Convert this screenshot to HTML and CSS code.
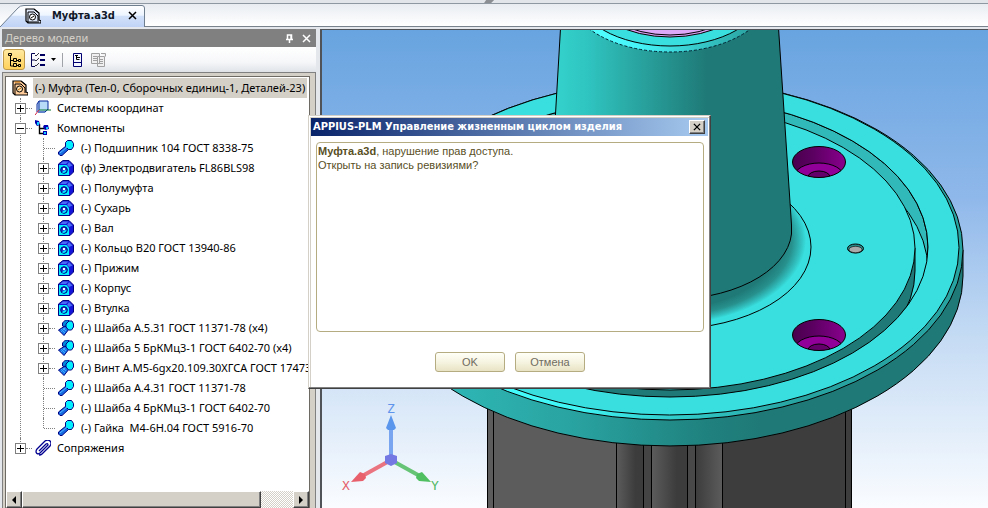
FILE: index.html
```html
<!DOCTYPE html>
<html lang="ru">
<head>
<meta charset="utf-8">
<title>Муфта.a3d</title>
<link rel="stylesheet" href="styles.css">
</head>
<body>
<svg class="defs" aria-hidden="true">
  <symbol id="i-assembly" viewBox="0 0 16 16">
    <path d="M1 1h8l5 4v7l2 1v2H3l-2-2z" fill="#fc9" stroke="#000" stroke-width="1.2"/>
    <path d="M9 1l5 4M3 15V4h6l4 4v5" fill="none" stroke="#000"/>
    <circle cx="7.500" cy="9" r="3" fill="#ffe0b0" stroke="#000"/>
    <path d="M6 10l3-2M3 2h5" stroke="#b60" fill="none"/>
  </symbol>
  <symbol id="i-doc" viewBox="0 0 16 16">
    <path d="M1 1h8l5 4v7l2 1v2H3l-2-2z" fill="#dfe8f8" stroke="#000" stroke-width="1.2"/>
    <path d="M9 1l5 4M3 15V4h6l4 4v5" fill="none" stroke="#000"/>
    <circle cx="7.500" cy="9" r="3" fill="#fff" stroke="#000"/>
    <path d="M6 10l3-2M2 14h12" stroke="#000" fill="none"/>
  </symbol>
  <symbol id="i-axes" viewBox="0 0 16 16">
    <path d="M2 4l2-3h9v9l-3 3H3z" fill="#b8dcf8"/>
    <path d="M4 10V1h9v9M2 12V4l2-3M3 12h7l3-3" fill="none" stroke="#0a2a9c"/>
    <path d="M4 10h12" stroke="#087830"/><path d="M4 10l-4 5" stroke="#d02040"/>
  </symbol>
  <symbol id="i-parts" viewBox="0 0 16 16">
    <path d="M4.500 4v9.500H9M4.500 8.500H10" fill="none" stroke="#000" stroke-width="1.400"/>
    <path d="M0 0l4 1 1 4-3 1-2-3zM9 5l4 0 1 4-4 1-2-3zM8 11l4 0 0 4-4 0z" fill="#0000b0"/>
    <path d="M2 2h2v3H2zM11 7h2v2h-2zM9 12h2v2H9z" fill="#1cf"/>
  </symbol>
  <symbol id="i-bolt" viewBox="0 0 16 16">
    <path d="M.5 12L8 6l3 3-7 6.500H2L.5 14z" fill="#1468e0" stroke="#000080"/>
    <path d="M7.500 2.500l2-2h4l2 3v3l-2 3h-3l-3-3z" fill="#0ef" stroke="#000080"/>
    <path d="M2 13l7-6" stroke="#5bf"/>
  </symbol>
  <symbol id="i-bolts" viewBox="0 0 16 16">
    <path d="M4.500 3l3-3h3l1 3-4 4-3-1z" fill="#08d" stroke="#000080"/>
    <path d="M.5 10L7 6l4 3-5 6.500z" fill="#1878e8" stroke="#000080"/>
    <path d="M3 9l4 4M5 8l3 3M3 12l4-4" stroke="#4af" fill="none"/>
    <path d="M8 4l3-3h3l1.500 3v3l-2 3h-3L8 7z" fill="#0ef" stroke="#000080"/>
  </symbol>
  <symbol id="i-part" viewBox="0 0 16 16">
    <path d="M.5 4L5 .5h6L15.500 5v7L12 15.500H.500z" fill="#1414d8" stroke="#000080"/>
    <path d="M2 4l3-2.500h5.500L8 4zM11 2l3.500 3.500L11 7 9 5z" fill="#4a6cf4"/>
    <path d="M1 5h7.500l2.500 3v7H1z" fill="#0ef"/>
    <circle cx="6" cy="10" r="3.300" fill="#1840d0" stroke="#000080"/>
    <path d="M4 12.500A3 3 0 0 0 8.500 10L6 10.500z" fill="#0ef"/>
    <path d="M5 8h2v2H5z" fill="#fff"/>
  </symbol>
  <symbol id="i-clip" viewBox="0 0 16 16">
    <path d="M4 11l7-7q2-1 2 1l-8 8q-3 2-4-1 0-2 1-3l8-8q3-2 5 0t0 5l-8 8q-1 1-3 1" fill="none" stroke="#000090" stroke-width="1.300"/>
  </symbol>
</svg>

<header class="tabs">
  <svg class="tab-shape" viewBox="0 0 146 22" aria-hidden="true">
    <defs><linearGradient id="tabg" x2="0" y2="1"><stop offset="0" stop-color="#fff"/><stop offset=".45" stop-color="#eef5ff"/><stop offset=".5" stop-color="#d2e1fa"/><stop offset="1" stop-color="#c0d3f6"/></linearGradient></defs>
    <path d="M0 22L18 3Q20 .5 24 .5H142Q144.500 .5 144.500 3V22" fill="url(#tabg)" stroke="#6f7f90"/>
  </svg>
  <div class="tab">
    <svg class="icon"><use href="#i-doc"/></svg>
    <a class="tab-name" href="#scene">Муфта.a3d</a>
    <button class="bare" aria-label="Закрыть вкладку"><svg viewBox="0 0 9 9" class="cross"><path d="M1 1l7 7M8 1l-7 7"/></svg></button>
  </div>
</header>

<main class="work">
  <aside class="panel">
    <div class="panel-title">
      <h2>Дерево модели</h2>
      <button class="bare light" aria-label="Закрепить"><svg viewBox="0 0 9 9" class="cross"><path d="M2.500 5V1h4v4M1 5.500h7M4.500 6v3M6 1v4"/></svg></button>
      <button class="bare light" aria-label="Закрыть панель"><svg viewBox="0 0 9 9" class="cross"><path d="M1 1l7 7M8 1l-7 7"/></svg></button>
    </div>
    <div class="toolbar">
      <button class="tool on" aria-label="Дерево"><svg class="icon" viewBox="0 0 16 16"><path d="M4.500 3v11H8M4.500 8.500H8M11 8.500h2M11 13.500h2" fill="none" stroke="#000"/><path d="M2.500 1.500h3v2h-3zM7.500 6.500h3v3h-3zM7.500 11.500h3v3h-3zM12.500 7.500h2v2h-2zM12.500 12.500h2v2h-2z" fill="#ffd970" stroke="#000"/></svg></button>
      <button class="tool" aria-label="Состав"><svg class="icon" viewBox="0 0 16 16"><path d="M5 1.500H1.500v13H5M2 8h3" fill="none" stroke="#000050"/><path d="M5 3l1 1 3-3M5 8l1 1 3-3M5 13l1 1 3-3" fill="none" stroke="#334"/><path d="M10 3h5M10 8h5M10 13h5" stroke="#000060" stroke-width="2"/></svg></button>
      <svg class="caret" viewBox="0 0 5 3"><path d="M0 0h5L2.500 3z"/></svg>
      <span class="divider"></span>
      <button class="tool" aria-label="Раздел"><svg class="icon" viewBox="0 0 16 16"><path d="M4.500 1.500h8v13h-8zM4 10.500h9" fill="#f4f6ff" stroke="#000070"/><path d="M6 3.500h3M7.500 4v3.500h3M8 5.500h3" fill="none" stroke="#000"/></svg></button>
      <button class="tool" aria-label="Отчёт"><svg class="icon" viewBox="0 0 16 16"><path d="M.5 1.500h8v10h-8zM6.500 4.500h7v10h-7zM2 4.500h4M2 6.500h4M2 8.500h4M8 7.500h4M8 9.500h4M8 11.500h4M10 1.500h4.500v3" fill="#f0f0f0" stroke="#a0a0a0"/></svg></button>
    </div>
    <div class="frame">
      <div class="tree">
        <div class="root"><svg class="icon"><use href="#i-assembly"/></svg><span class="root-name">(-) Муфта (Тел-0, Сборочных единиц-1, Деталей-23)</span></div>
        <ul class="level">
          <li><div class="row"><button class="exp plus" aria-label="Развернуть"></button><svg class="icon"><use href="#i-axes"/></svg><span>Системы координат</span></div></li>
          <li><div class="row"><button class="exp" aria-label="Свернуть"></button><svg class="icon"><use href="#i-parts"/></svg><span>Компоненты</span></div>
            <ul class="level sub">
              <li><div class="row leaf"><svg class="icon"><use href="#i-bolt"/></svg><span>(-) Подшипник 104 ГОСТ 8338-75</span></div></li>
              <li><div class="row"><button class="exp plus" aria-label="Развернуть"></button><svg class="icon"><use href="#i-part"/></svg><span>(ф) Электродвигатель FL86BLS98</span></div></li>
              <li><div class="row"><button class="exp plus" aria-label="Развернуть"></button><svg class="icon"><use href="#i-part"/></svg><span>(-) Полумуфта</span></div></li>
              <li><div class="row"><button class="exp plus" aria-label="Развернуть"></button><svg class="icon"><use href="#i-part"/></svg><span>(-) Сухарь</span></div></li>
              <li><div class="row"><button class="exp plus" aria-label="Развернуть"></button><svg class="icon"><use href="#i-part"/></svg><span>(-) Вал</span></div></li>
              <li><div class="row"><button class="exp plus" aria-label="Развернуть"></button><svg class="icon"><use href="#i-part"/></svg><span>(-) Кольцо В20 ГОСТ 13940-86</span></div></li>
              <li><div class="row"><button class="exp plus" aria-label="Развернуть"></button><svg class="icon"><use href="#i-part"/></svg><span>(-) Прижим</span></div></li>
              <li><div class="row"><button class="exp plus" aria-label="Развернуть"></button><svg class="icon"><use href="#i-part"/></svg><span>(-) Корпус</span></div></li>
              <li><div class="row"><button class="exp plus" aria-label="Развернуть"></button><svg class="icon"><use href="#i-part"/></svg><span>(-) Втулка</span></div></li>
              <li><div class="row"><button class="exp plus" aria-label="Развернуть"></button><svg class="icon"><use href="#i-bolts"/></svg><span>(-) Шайба А.5.31 ГОСТ 11371-78 (x4)</span></div></li>
              <li><div class="row"><button class="exp plus" aria-label="Развернуть"></button><svg class="icon"><use href="#i-bolts"/></svg><span>(-) Шайба 5 БрКМц3-1 ГОСТ 6402-70 (x4)</span></div></li>
              <li><div class="row"><button class="exp plus" aria-label="Развернуть"></button><svg class="icon"><use href="#i-bolts"/></svg><span>(-) Винт А.М5-6gx20.109.30ХГСА ГОСТ 17473</span></div></li>
              <li><div class="row leaf"><svg class="icon"><use href="#i-bolt"/></svg><span>(-) Шайба А.4.31 ГОСТ 11371-78</span></div></li>
              <li><div class="row leaf"><svg class="icon"><use href="#i-bolt"/></svg><span>(-) Шайба 4 БрКМц3-1 ГОСТ 6402-70</span></div></li>
              <li><div class="row leaf"><svg class="icon"><use href="#i-bolt"/></svg><span>(-) Гайка&nbsp; М4-6Н.04 ГОСТ 5916-70</span></div></li>
            </ul>
          </li>
          <li><div class="row"><button class="exp plus" aria-label="Развернуть"></button><svg class="icon"><use href="#i-clip"/></svg><span>Сопряжения</span></div></li>
        </ul>
        <div class="scroll">
          <button class="raised" aria-label="Влево"><svg viewBox="0 0 4 8" class="arrow"><path d="M4 0v8L0 4z"/></svg></button>
          <div class="raised thumb"></div>
          <div class="track"></div>
          <button class="raised" aria-label="Вправо"><svg viewBox="0 0 4 8" class="arrow"><path d="M0 0v8l4-4z"/></svg></button>
        </div>
      </div>
    </div>
  </aside>

  <div class="view" id="scene">
    <svg class="scene" viewBox="322 30 666 478" preserveAspectRatio="xMinYMin slice" role="img" aria-label="Модель муфты">
      <defs>
        <linearGradient id="cone" gradientUnits="userSpaceOnUse" x1="555" x2="706"><stop offset="0" stop-color="#34d2cc"/><stop offset=".22" stop-color="#2fc4c0"/><stop offset=".55" stop-color="#29a4a0"/><stop offset="1" stop-color="#1f7a77"/></linearGradient>
        <linearGradient id="side" gradientUnits="userSpaceOnUse" x1="440" x2="760"><stop offset="0" stop-color="#2eb8b6"/><stop offset=".4" stop-color="#29a4a2"/><stop offset=".85" stop-color="#1f807d"/><stop offset="1" stop-color="#1f7a77"/></linearGradient>
        <linearGradient id="chamfer" gradientUnits="userSpaceOnUse" x1="480" x2="800"><stop offset="0" stop-color="#46ffff"/><stop offset=".3" stop-color="#40f4f4"/><stop offset=".6" stop-color="#32cccb"/><stop offset="1" stop-color="#27a3a1"/></linearGradient>
        <linearGradient id="lip" gradientUnits="userSpaceOnUse" x1="590" x2="750"><stop offset="0" stop-color="#50ffff"/><stop offset=".3" stop-color="#46f4f8"/><stop offset="1" stop-color="#2aa4a2"/></linearGradient>
        <radialGradient id="fillet" gradientUnits="userSpaceOnUse" cx="0" cy="0" r="141" gradientTransform="translate(665 240) scale(1 .6)"><stop offset=".82" stop-color="#1f7a77"/><stop offset=".9" stop-color="#27908d"/><stop offset=".97" stop-color="#32c4c3"/><stop offset="1" stop-color="#38dfde"/></radialGradient>
        <linearGradient id="bore"><stop offset="0" stop-color="#48004c"/><stop offset=".4" stop-color="#5c0062"/><stop offset="1" stop-color="#8a008e"/></linearGradient>
        <linearGradient id="g1"><stop offset="0" stop-color="#5c5c5c"/><stop offset=".7" stop-color="#3c3c3c"/></linearGradient>
        <linearGradient id="g2"><stop offset="0" stop-color="#3c3c3c"/><stop offset="1" stop-color="#5c5c5c"/></linearGradient>
        <clipPath id="groove"><ellipse cx="670" cy="247" rx="258" ry="150"/></clipPath>
        <clipPath id="hole"><ellipse rx="26.500" ry="15.500"/></clipPath>
        <g id="bolt-hole">
          <g clip-path="url(#hole)"><ellipse rx="27" ry="16" fill="url(#bore)"/><ellipse cy="15" rx="25" ry="14" fill="#92009a" stroke="#000"/><ellipse cy="15" rx="11" ry="6" fill="#64006a" stroke="#000"/></g>
          <ellipse rx="26.500" ry="15.500" fill="none" stroke="#000"/>
        </g>
      </defs>
      <g stroke="#000">
        <path d="M487.500 380H851.500V520H487.500z" fill="#5c5c5c"/>
        <path d="M616.500 420h27v100h-27z" fill="url(#g1)"/>
        <path d="M643.500 420h8v100h-8z" fill="#444"/>
        <path d="M651.500 420h36v100h-36z" fill="url(#g1)"/>
        <path d="M687.500 420h8v100h-8z" fill="#484848"/>
        <path d="M695.500 420h27v100h-27z" fill="url(#g2)"/>
        <path d="M722.500 380h123v140h-123zM845.500 380h6v140h-6z" fill="#3d3d3d"/>
        <path d="M493.500 380v140"/>
        <path d="M377 250V276A293 170 0 0 0 963 276V250" fill="url(#side)"/>
        <ellipse cx="670" cy="250" rx="293" ry="170" fill="url(#chamfer)"/>
        <ellipse cx="669.500" cy="247.500" rx="289.500" ry="167.500" fill="#38dfde"/>
        <g clip-path="url(#groove)">
          <ellipse cx="670" cy="247" rx="258" ry="150" fill="#30b9b8"/>
          <ellipse cx="670" cy="270" rx="258" ry="150" fill="#38dfde"/>
          <path d="M425 248V271A245 142 0 0 0 915 271V248" fill="#1f7a77"/>
          <ellipse cx="670" cy="248" rx="245" ry="142" fill="#38dfde"/>
        </g>
        <ellipse cx="670" cy="247" rx="258" ry="150" fill="none"/>
        <ellipse cx="670" cy="247" rx="141" ry="82" fill="url(#fillet)"/>
        <path d="M561 20L549 225A121.500 70 0 0 0 791.500 234V225L778 20z" fill="url(#cone)"/>
        <ellipse cx="670" cy="-6" rx="101" ry="58" fill="url(#lip)" stroke="#023" stroke-dasharray="3 2"/>
        <ellipse cx="670" cy="-8" rx="94" ry="54" fill="#38dfde"/>
        <ellipse cx="670" cy="-9" rx="80" ry="46" fill="#d9a0f4"/>
        <ellipse cx="670" cy="-10" rx="76" ry="45" fill="#dca8f8"/>
        <ellipse cx="855.500" cy="248.500" rx="8" ry="4.500" fill="#288e8c"/>
        <ellipse cx="855.500" cy="249.500" rx="6.500" ry="3.200" fill="#aaa" stroke-width=".6"/>
      </g>
      <use href="#bolt-hole" x="819" y="162"/>
      <use href="#bolt-hole" x="819" y="335"/>
      <g class="triad">
        <path d="M391 460V428" stroke="#78a4f0" stroke-width="4"/><path d="M391 415l5 13-2 2h-6l-2-2z" fill="#5a96ec"/>
        <path d="M391 460L364 475" stroke="#ea7480" stroke-width="4"/><path d="M351 482l9-10 5 2 1 4-3 3z" fill="#e8606c"/>
        <path d="M391 460L418 475" stroke="#66c477" stroke-width="4"/><path d="M431 482l-9-10-5 2-1 4 3 3z" fill="#50bf62"/>
        <path d="M385 456l6-2 6 2v7l-6 3-6-3z" fill="#7478e2"/>
        <text class="z" x="387" y="413">Z</text><text class="x" x="342" y="490">X</text><text class="y" x="431" y="490">Y</text>
      </g>
    </svg>
  </div>
</main>

<section class="dialog" role="dialog" aria-labelledby="dlg-title">
  <div class="dialog-bar">
    <h1 id="dlg-title">APPIUS-PLM Управление жизненным циклом изделия</h1>
    <button class="raised close" aria-label="Закрыть"><svg viewBox="0 0 9 9" class="cross"><path d="M1 1l7 7M8 1l-7 7"/></svg></button>
  </div>
  <div class="dialog-body">
    <p class="message"><b>Муфта.a3d</b>, нарушение прав доступа.<br>Открыть на запись ревизиями?</p>
    <div class="actions"><button class="btn">OK</button><button class="btn">Отмена</button></div>
  </div>
</section>
</body>
</html>
```
FILE: styles.css
```css
* { box-sizing: border-box; }
body {
  margin: 0;
  height: 100vh;
  display: flex;
  flex-direction: column;
  overflow: hidden;
  background: #e4e8ec;
  color: #000;
  font: 11px/20px "Noto Sans", sans-serif;
}
button { margin: 0; padding: 0; font: inherit; color: inherit; }
h1, h2, p, ul { margin: 0; padding: 0; }
ul { list-style: none; }
.defs { position: absolute; width: 0; height: 0; }
.icon { width: 16px; height: 16px; flex: none; display: block; }
.cross { width: 9px; height: 9px; display: block; fill: none; stroke: currentColor; stroke-width: 2; }
.bare { border: 0; background: none; }

.tabs {
  flex: none;
  position: relative;
  height: 27px;
  border-top: 3px solid #e2e5e9;
  border-bottom: 1px solid #77828c;
  background: linear-gradient(#8d98a3 0 1px, #e9edf2 1px, #fff);
}
.tabs::after {
  content: "";
  position: absolute;
  left: 49%;
  top: -3px;
  width: 10px;
  height: 3px;
  background: #8b8f94;
  clip-path: polygon(20% 0, 100% 0, 70% 100%, 0 100%);
}
.tab-shape { position: absolute; left: 0; top: 2px; width: 146px; height: 22px; }
.tab {
  position: relative;
  display: flex;
  align-items: center;
  height: 25px;
  padding-left: 25px;
}
.tab-name {
  margin: 0 13px 0 11px;
  color: #101828;
  font: bold 11px/20px "DejaVu Sans Condensed", "Noto Sans", sans-serif;
  text-decoration: none;
}
.tab .cross { stroke-width: 1.5; }

.work { flex: 1; min-height: 0; display: flex; padding-top: 2px; }
.panel { flex: none; width: 316px; padding-left: 2px; display: flex; flex-direction: column; }
.panel-title {
  display: flex;
  align-items: center;
  gap: 8px;
  height: 18px;
  padding: 0 5px 0 3px;
  background: #808080;
  color: #d4d0c8;
}
.panel-title h2 { flex: 1; font: inherit; }
.light { color: #fff; }
.light .cross { stroke-width: 1.5; }
.toolbar {
  display: flex;
  align-items: center;
  height: 25px;
  padding-left: 1px;
  background: linear-gradient(#fff, #f6f7f9 60%, #dfe3e8);
}
.tool {
  width: 22px;
  height: 21px;
  display: grid;
  place-items: center;
  border: 1px solid transparent;
  border-radius: 3px;
  background: none;
}
.tool.on { margin-right: 2px; border-color: #c09a48; background: linear-gradient(#ffe9a0, #ffd15c); }
.caret { width: 5px; height: 3px; margin: 0 6px 0 2px; }
.divider { width: 1px; height: 14px; margin-right: 3px; background: #a0a4a8; }

.frame {
  flex: 1;
  min-height: 0;
  display: flex;
  padding: 3px 5px 0 2px;
  border: 1px solid #808080;
  border-bottom: 0;
  background: #d4d0c8;
}
.tree {
  flex: 1;
  min-width: 0;
  display: flex;
  flex-direction: column;
  overflow: hidden;
  border: 1px solid #6d6a64;
  border-bottom: 0;
  background: #fff;
}
.root { display: flex; align-items: center; height: 20px; margin-top: 1px; padding-left: 6px; gap: 5px; }
.root-name { padding: 0 2px; background: #d4d0c8; white-space: nowrap; }
.level { padding-left: 9px; }
.level li { position: relative; }
.level li::before {
  content: "";
  position: absolute;
  left: 5px;
  top: 0;
  height: 100%;
  border-left: 1px dotted #808080;
}
.level > li:last-child::before { height: 10px; }
.sub { padding-left: 23px; }
.row { position: relative; display: flex; align-items: center; height: 20px; white-space: nowrap; }
.row::before { content: ""; order: 1; flex: none; width: 6px; margin-right: 3px; border-top: 1px dotted #808080; }
.row .icon { order: 2; margin-right: 6px; }
.row span { order: 3; }
.sub .icon { margin-right: 7px; }
.leaf { padding-left: 6px; }
.leaf::before { width: 11px; }
.exp {
  flex: none;
  width: 11px;
  height: 11px;
  border: 1px solid #808080;
  background: linear-gradient(#000, #000) center / 7px 1px no-repeat #fff;
}
.exp.plus {
  background: linear-gradient(#000, #000) center / 7px 1px no-repeat,
    linear-gradient(#000, #000) center / 1px 7px no-repeat #fff;
}
.scroll { display: flex; height: 17px; margin-top: auto; }
.raised {
  display: grid;
  place-items: center;
  border: 1px solid;
  border-color: #fff #404040 #404040 #fff;
  background: #d4d0c8;
  box-shadow: inset -1px -1px #808080;
}
.scroll button { flex: none; width: 16px; }
.thumb { flex: 238; }
.track { flex: 32; background: repeating-conic-gradient(#d4d0c8 0 25%, #fff 0 50%) 0 0 / 2px 2px; }
.arrow { width: 4px; height: 8px; }

.view {
  flex: 1;
  min-width: 0;
  margin-left: 4px;
  border: solid #505458;
  border-width: 1px 0 0 2px;
  background: linear-gradient(#68a4e0, #8fb8ea 35%, #c6dcf4 65%, #fafcff);
}
.scene { display: block; width: 100%; height: 100%; }
.triad text { font: 13px "DejaVu Sans Mono", monospace; }
.triad .z { fill: #5f94ec; }
.triad .x { fill: #e4606c; }
.triad .y { fill: #52b864; }

.dialog {
  position: absolute;
  left: 308px;
  top: 115px;
  width: 403px;
  border: 1px solid;
  border-color: #d4d0c8 #404040 #404040 #d4d0c8;
  background: #fff;
  box-shadow: inset -1px -1px #808080, inset 1px 1px #fff, inset 2px 2px #d4d0c8;
}
.dialog-bar {
  display: flex;
  align-items: center;
  height: 18px;
  margin: 2px 2px 0;
  padding: 0 3px 0 2px;
  background: linear-gradient(90deg, #0a246a, #a6caf0);
  color: #fff;
}
.dialog-bar h1 { flex: 1; font: bold 11px/18px "DejaVu Sans Condensed", "Noto Sans", sans-serif; white-space: nowrap; }
.close { width: 16px; height: 14px; color: #000; }
.close .cross { width: 8px; height: 8px; stroke-width: 1.5; }
.dialog-body { padding: 6px 6px 16px 7px; }
.message {
  height: 190px;
  padding: 1px;
  border: 1px solid #b5ac82;
  border-radius: 4px;
  color: #594f1f;
  font: 11px/14px "Liberation Sans", sans-serif;
}
.actions { display: flex; justify-content: center; gap: 10px; margin-top: 20px; }
.btn {
  width: 70px;
  height: 20px;
  border: 1px solid #b5ac82;
  border-radius: 3px;
  background: linear-gradient(#fffff8, #f4f1dc 60%, #e8e3c4);
  color: #706c60;
  font: 11px/16px "Liberation Sans", sans-serif;
}
```
